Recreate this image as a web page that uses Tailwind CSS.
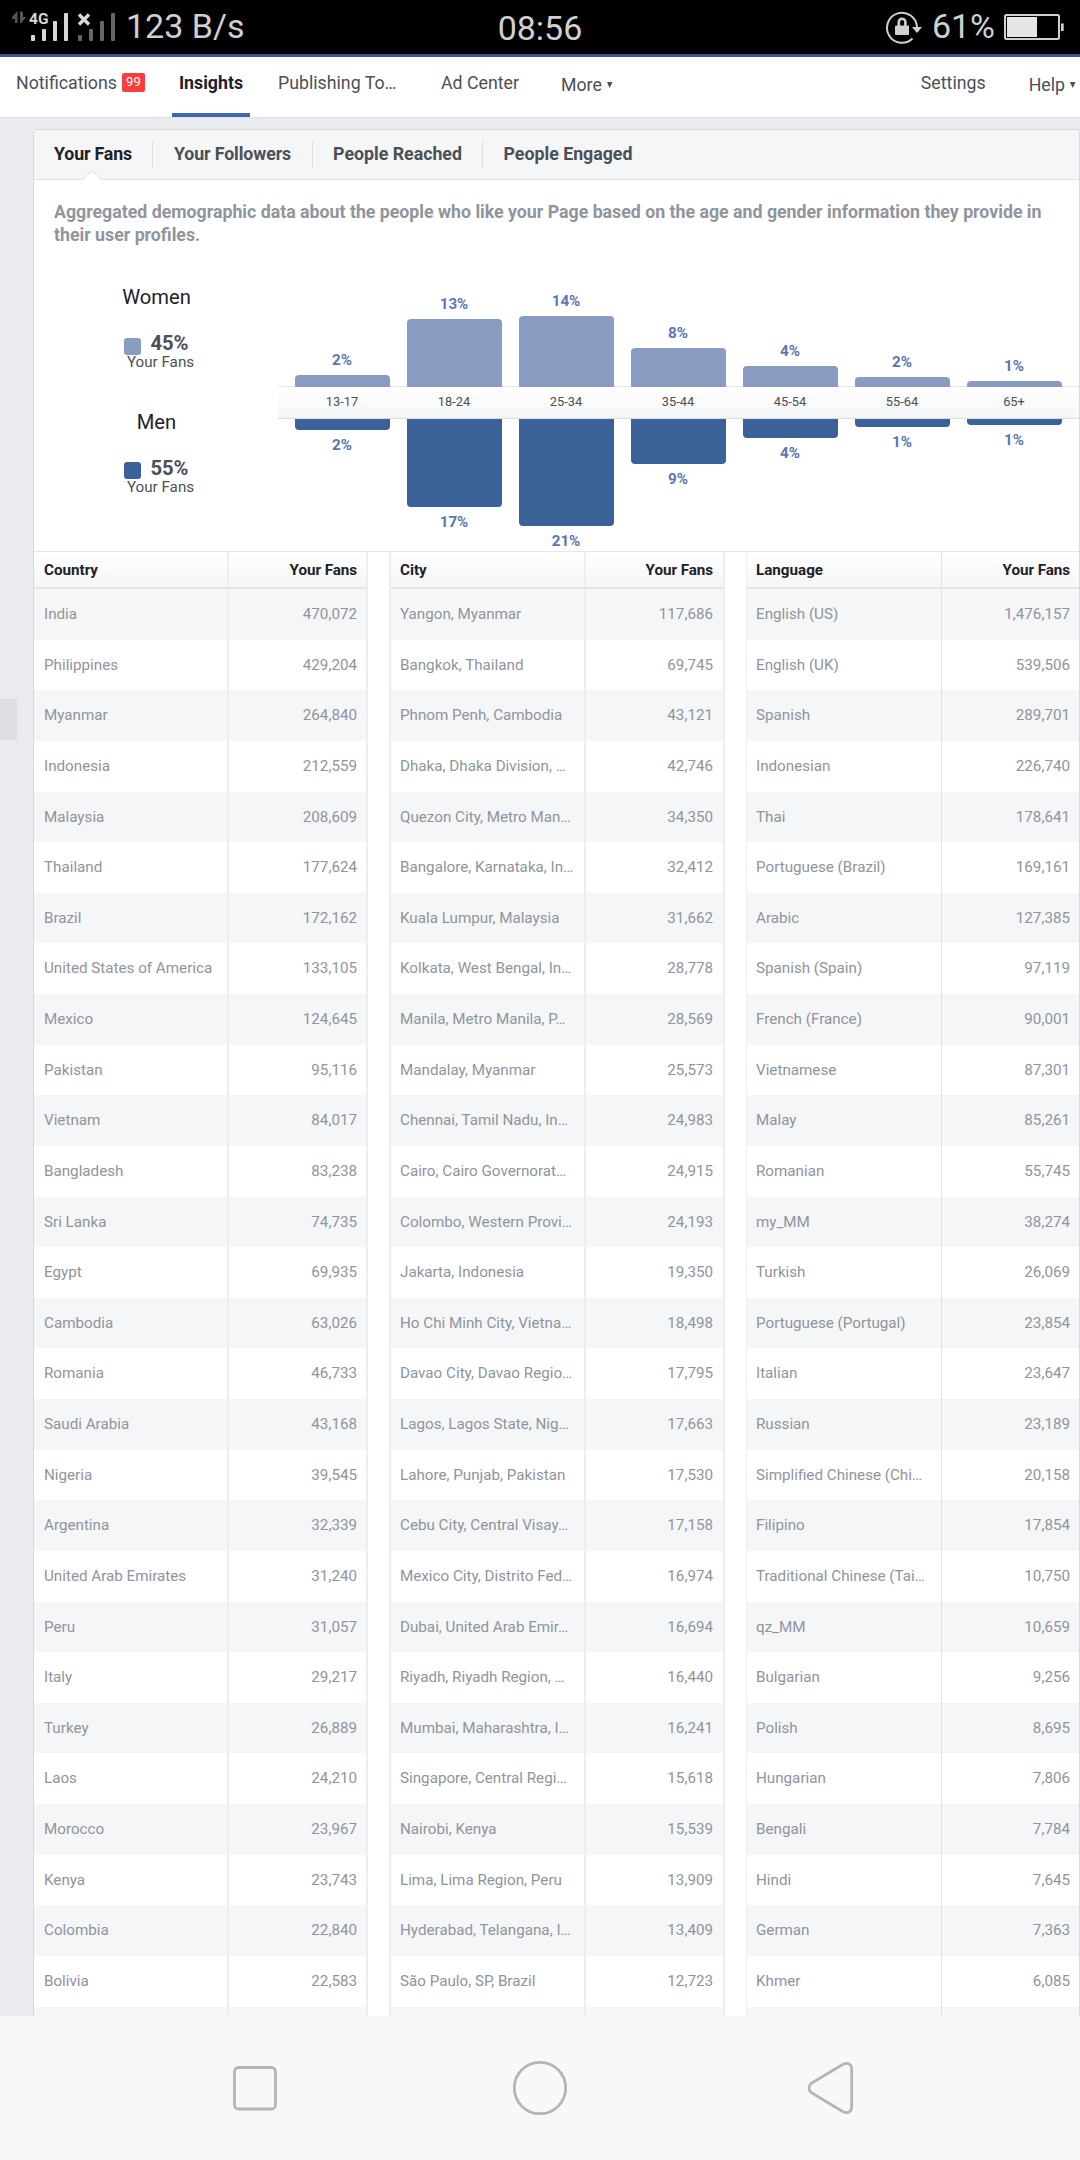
<!DOCTYPE html>
<html lang="en">
<head>
  <meta charset="UTF-8">
  <meta name="viewport" content="width=device-width, initial-scale=1.0">
  <title>Page Insights - Your Fans</title>
  <!-- Tailwind CSS CDN -->
  <script src="https://cdn.jsdelivr.net/npm/@tailwindcss/browser@4"></script>
</head>
<body class="w-[1080px] h-[2160px] overflow-hidden bg-[#e9ebee] flex flex-col font-[Roboto,sans-serif] text-[#1d2129]">

  <!-- Status bar -->
  <header class="h-[54px] shrink-0 bg-black text-[#d0d0d0] text-[34px] leading-[54px] grid grid-cols-3">
    <div class="flex">
      <svg class="w-[126px] h-[54px] shrink-0" viewBox="0 0 126 54">
        <path d="M17.5 11v12h-2.5v-4h-3v-2z M20 11v12h1.500l4.500-6h-3v-5z" fill="#555"/>
        <text x="29" y="24" font-family="Roboto" font-size="15.500" font-weight="700" fill="#d8d8d8">4G</text>
        <g fill="#d8d8d8">
          <rect x="31" y="35" width="4" height="6" rx="1"/>
          <rect x="42" y="29" width="4" height="12" rx="1"/>
          <rect x="53" y="21" width="4" height="20" rx="1"/>
          <rect x="64" y="13" width="4" height="28" rx="1"/>
        </g>
        <path d="M79 14.500l10 10M89 14.500l-10 10" stroke="#d8d8d8" stroke-width="3.400"/>
        <g fill="#666">
          <rect x="78" y="35" width="4" height="6" rx="1"/>
          <rect x="89" y="29" width="4" height="12" rx="1"/>
          <rect x="100" y="21" width="4" height="20" rx="1"/>
          <rect x="111" y="13" width="4" height="28" rx="1"/>
        </g>
      </svg>
      <span class="whitespace-nowrap leading-[53px]">123 B/s</span>
    </div>
    <div class="text-center pt-px">08:56</div>
    <div class="flex justify-end items-start pr-4">
      <svg class="w-[38px] h-[36px] mt-[9px] mr-[9px]" viewBox="0 0 38 36">
        <path d="M27.500 29.500A15 15 0 1 1 32 18" fill="none" stroke="#d0d0d0" stroke-width="2"/>
        <path d="M27 18h10l-5 6z" fill="#d0d0d0"/>
        <rect x="10" y="16.500" width="14" height="9.500" rx="1" fill="#d0d0d0"/>
        <path d="M13.800 17v-4a3.300 3.300 0 0 1 6.600 0v4" fill="none" stroke="#d0d0d0" stroke-width="2.600"/>
      </svg>
      <span class="leading-[52px]">61%</span>
      <svg class="w-[60px] h-[26px] mt-[14px] ml-[9px]" viewBox="0 0 60 26">
        <rect x="1" y="1" width="54" height="24" rx="1.500" fill="none" stroke="#d0d0d0" stroke-width="2"/>
        <rect x="3" y="3" width="30" height="20" fill="#e6e6e6"/>
        <rect x="57" y="9.500" width="2.700" height="7.500" fill="#d0d0d0"/>
      </svg>
    </div>
  </header>

  <!-- Page navigation -->
  <nav class="h-[64px] shrink-0 bg-white border-t-[3px] border-t-[#365899] border-b border-b-[#dddfe2] text-[17.75px] leading-6 text-[#4b4f56] flex whitespace-nowrap">
    <a class="pt-[14px] pl-[16px] w-[172px] flex items-start">Notifications
      <span class="ml-[5px] mt-[2px] w-[23px] h-[19px] rounded-[2px] bg-[#fa3e3e] text-white text-[13px] leading-[17px] text-center">99</span>
    </a>
    <a class="pt-[14px] w-[78px] h-[60px] text-center font-bold text-[#1d2129] border-b-4 border-[#4267b2]">Insights</a>
    <a class="pt-[14px] pl-[28px] w-[190px]">Publishing To…</a>
    <a class="pt-[14px] pl-px w-[121px]">Ad Center</a>
    <a class="pt-[16px] flex items-start gap-[5px]">More
      <svg class="w-[6px] h-[6px] mt-[9px]" viewBox="0 0 6 6"><path d="M0 0h5.500L2.700 6z" fill="#4b4f56"/></svg>
    </a>
    <a class="pt-[14px] ml-auto">Settings</a>
    <a class="pt-[16px] ml-[43px] pr-[4px] flex items-start gap-[5px]">Help
      <svg class="w-[6px] h-[6px] mt-[9px]" viewBox="0 0 6 6"><path d="M0 0h5.500L2.700 6z" fill="#4b4f56"/></svg>
    </a>
  </nav>

  <!-- Main Content -->
  <main class="h-[1898px] shrink-0 overflow-hidden pt-[11px] flex items-start">
    <div class="w-[17px] h-[41px] mt-[570px] mr-[16px] bg-[#dddee2] shrink-0"></div>

    <section class="w-[1047px] h-[1900px] bg-white border border-[#d8dade] rounded-t-[4px] flex flex-col">
      <!-- Tabs -->
      <div class="relative h-[50px] shrink-0 bg-[#f5f6f7] border-b border-[#dddfe2] rounded-t-[3px] flex items-center text-[17.75px] font-bold text-[#4b4f56]">
        <span class="w-[118px] text-center text-[#1d2129] tracking-[-0.15px]">Your Fans</span>
        <span class="w-px h-[27px] bg-[#dddfe2]"></span>
        <span class="w-[159px] text-center tracking-[-0.1px]">Your Followers</span>
        <span class="w-px h-[27px] bg-[#dddfe2]"></span>
        <span class="w-[169px] text-center">People Reached</span>
        <span class="w-px h-[27px] bg-[#dddfe2]"></span>
        <span class="w-[170px] text-center">People Engaged</span>
        <svg class="absolute left-[48px] top-[40px] w-[20px] h-[10px]" viewBox="0 0 20 10">
          <path d="M0 10L10 1l10 9" fill="#fff" stroke="#e4e6e9" stroke-width="1.200"/>
        </svg>
      </div>

      <!-- Demographics -->
      <div class="h-[371px] shrink-0">
        <p class="h-[66px] pt-[21px] pl-5 text-[17.74px] leading-[22.8px] font-bold text-[#90949c] whitespace-nowrap">Aggregated demographic data about the people who like your Page based on the age and gender information they provide in<br>their user profiles.</p>
        <div class="flex">
          <div class="w-[244px] pt-[39px] pl-px flex flex-col items-center text-[15.2px] leading-4 text-[#4b4f56]">
            <h2 class="text-[20.2px] leading-6 text-[#1d2129]">Women</h2>
            <div class="mt-[22px] flex items-end gap-[9px]">
              <span class="size-[17px] rounded-[3px] bg-[#899bc1]"></span>
              <span class="text-[20.2px] leading-6 font-bold">45%</span>
            </div>
            <span class="-mt-px pl-2">Your Fans</span>
            <h2 class="mt-[40px] text-[20.2px] leading-6 text-[#1d2129]">Men</h2>
            <div class="mt-[22px] flex items-end gap-[9px]">
              <span class="size-[17px] mb-px rounded-[3px] bg-[#3b6298]"></span>
              <span class="text-[20.2px] leading-6 font-bold">55%</span>
            </div>
            <span class="-mt-px pl-2">Your Fans</span>
          </div>
          <div class="flex-1 text-[15.2px] leading-5 font-bold text-[#5b76b1]">
            <div id="women" class="h-[141px] pl-2 flex items-end border-b border-[#e3e5e7]"></div>
            <div id="ages" class="h-[32px] pl-2 pb-[2px] flex items-center border-b border-[#dcdee0] bg-linear-to-b from-white to-[#f5f6f7] text-[12.8px] font-normal text-[#4b4f56]"></div>
            <div id="men" class="h-[130px] pl-2 flex items-start"></div>
          </div>
        </div>
      </div>

      <!-- Tables -->
      <div id="tables" class="border-t border-[#e3e5e7] flex gap-[21px] text-[15.2px]"></div>
    </section>
  </main>

  <!-- System navigation -->
  <footer class="h-[144px] shrink-0 bg-[#f8f8f8]">
    <svg class="w-[1080px] h-[144px]" viewBox="0 0 1080 144" fill="none" stroke="#b5b5b5" stroke-width="2.800">
      <rect x="234.500" y="51.500" width="41" height="41.500" rx="4"/>
      <circle cx="540" cy="72" r="25.700"/>
      <path d="M811 67.500L843 48.300q8 -3 8.700 4.500v38.400q-.7 7.500 -8.700 4.500L811 76.500q-4 -4.500 0 -9z"/>
    </svg>
  </footer>

  <script>
    const ages = [
      { age: '13-17', women: '2%', womenBar: 12, men: '2%', menBar: 11 },
      { age: '18-24', women: '13%', womenBar: 68, men: '17%', menBar: 88 },
      { age: '25-34', women: '14%', womenBar: 71, men: '21%', menBar: 107 },
      { age: '35-44', women: '8%', womenBar: 39, men: '9%', menBar: 45 },
      { age: '45-54', women: '4%', womenBar: 21, men: '4%', menBar: 19 },
      { age: '55-64', women: '2%', womenBar: 10, men: '1%', menBar: 8 },
      { age: '65+', women: '1%', womenBar: 6, men: '1%', menBar: 6 },
    ];

    document.getElementById('women').innerHTML = ages.map(a => `
      <div class="w-[112px] -mb-px shrink-0 flex flex-col items-center">
        <span class="mb-[5px]">${a.women}</span>
        <div class="w-[95px] rounded-t-[4px] bg-[#899bc1]" style="height:${a.womenBar}px"></div>
      </div>`).join('');
    document.getElementById('ages').innerHTML = ages.map(a => `
      <span class="w-[112px] shrink-0 text-center">${a.age}</span>`).join('');
    document.getElementById('men').innerHTML = ages.map(a => `
      <div class="w-[112px] shrink-0 flex flex-col items-center">
        <div class="w-[95px] rounded-b-[4px] bg-[#3b6298]" style="height:${a.menBar}px"></div>
        <span class="mt-[5px]">${a.men}</span>
      </div>`).join('');

    const tables = [
      { title: 'Country', rows: [
        ['India', '470,072'], ['Philippines', '429,204'], ['Myanmar', '264,840'], ['Indonesia', '212,559'],
        ['Malaysia', '208,609'], ['Thailand', '177,624'], ['Brazil', '172,162'], ['United States of America', '133,105'],
        ['Mexico', '124,645'], ['Pakistan', '95,116'], ['Vietnam', '84,017'], ['Bangladesh', '83,238'],
        ['Sri Lanka', '74,735'], ['Egypt', '69,935'], ['Cambodia', '63,026'], ['Romania', '46,733'],
        ['Saudi Arabia', '43,168'], ['Nigeria', '39,545'], ['Argentina', '32,339'], ['United Arab Emirates', '31,240'],
        ['Peru', '31,057'], ['Italy', '29,217'], ['Turkey', '26,889'], ['Laos', '24,210'],
        ['Morocco', '23,967'], ['Kenya', '23,743'], ['Colombia', '22,840'], ['Bolivia', '22,583'], ['', ''],
      ] },
      { title: 'City', rows: [
        ['Yangon, Myanmar', '117,686'], ['Bangkok, Thailand', '69,745'], ['Phnom Penh, Cambodia', '43,121'], ['Dhaka, Dhaka Division, …', '42,746'],
        ['Quezon City, Metro Man…', '34,350'], ['Bangalore, Karnataka, In…', '32,412'], ['Kuala Lumpur, Malaysia', '31,662'], ['Kolkata, West Bengal, In…', '28,778'],
        ['Manila, Metro Manila, P…', '28,569'], ['Mandalay, Myanmar', '25,573'], ['Chennai, Tamil Nadu, In…', '24,983'], ['Cairo, Cairo Governorat…', '24,915'],
        ['Colombo, Western Provi…', '24,193'], ['Jakarta, Indonesia', '19,350'], ['Ho Chi Minh City, Vietna…', '18,498'], ['Davao City, Davao Regio…', '17,795'],
        ['Lagos, Lagos State, Nig…', '17,663'], ['Lahore, Punjab, Pakistan', '17,530'], ['Cebu City, Central Visay…', '17,158'], ['Mexico City, Distrito Fed…', '16,974'],
        ['Dubai, United Arab Emir…', '16,694'], ['Riyadh, Riyadh Region, …', '16,440'], ['Mumbai, Maharashtra, I…', '16,241'], ['Singapore, Central Regi…', '15,618'],
        ['Nairobi, Kenya', '15,539'], ['Lima, Lima Region, Peru', '13,909'], ['Hyderabad, Telangana, I…', '13,409'], ['São Paulo, SP, Brazil', '12,723'], ['', ''],
      ] },
      { title: 'Language', rows: [
        ['English (US)', '1,476,157'], ['English (UK)', '539,506'], ['Spanish', '289,701'], ['Indonesian', '226,740'],
        ['Thai', '178,641'], ['Portuguese (Brazil)', '169,161'], ['Arabic', '127,385'], ['Spanish (Spain)', '97,119'],
        ['French (France)', '90,001'], ['Vietnamese', '87,301'], ['Malay', '85,261'], ['Romanian', '55,745'],
        ['my_MM', '38,274'], ['Turkish', '26,069'], ['Portuguese (Portugal)', '23,854'], ['Italian', '23,647'],
        ['Russian', '23,189'], ['Simplified Chinese (Chi…', '20,158'], ['Filipino', '17,854'], ['Traditional Chinese (Tai…', '10,750'],
        ['qz_MM', '10,659'], ['Bulgarian', '9,256'], ['Polish', '8,695'], ['Hungarian', '7,806'],
        ['Bengali', '7,784'], ['Hindi', '7,645'], ['German', '7,363'], ['Khmer', '6,085'], ['', ''],
      ] },
    ];

    // outer borders and name column padding differ per table
    const frames = ['w-[334px] border-r-2', 'w-[336px] border-x-2', 'w-[333px] border-l'];
    const pads = ['pl-[10px]', 'pl-[9px]', 'pl-[9px]'];
    const ends = ['pr-[9px]', 'pr-[10px]', 'pr-[9px]'];
    const lines = ['border-r-2 border-[#eceef0]', 'border-r-2 border-[#eceef0]', 'border-r border-[#e0e2e5]'];

    document.getElementById('tables').innerHTML = tables.map((t, i) => `
      <div class="${frames[i]} shrink-0 border-[#eceef0]">
        <div class="h-[37px] border-b-2 border-[#e3e5e7] bg-linear-to-b from-white to-[#f5f6f7] flex leading-[36px] font-bold text-[15.2px]">
          <span class="w-[195px] ${pads[i]} ${lines[i]}">${t.title}</span>
          <span class="flex-1 ${ends[i]} text-right tracking-[-0.05px]">Your Fans</span>
        </div>
        ${t.rows.map(([name, fans]) => `
        <div class="h-[50.63px] flex leading-[50px] text-[#90949c] odd:bg-white even:bg-[#f5f6f7]">
          <span class="w-[195px] ${pads[i]} ${lines[i]} whitespace-nowrap">${name}</span>
          <span class="flex-1 ${ends[i]} text-right">${fans}</span>
        </div>`).join('')}
      </div>`).join('');
  </script>
</body>
</html>
